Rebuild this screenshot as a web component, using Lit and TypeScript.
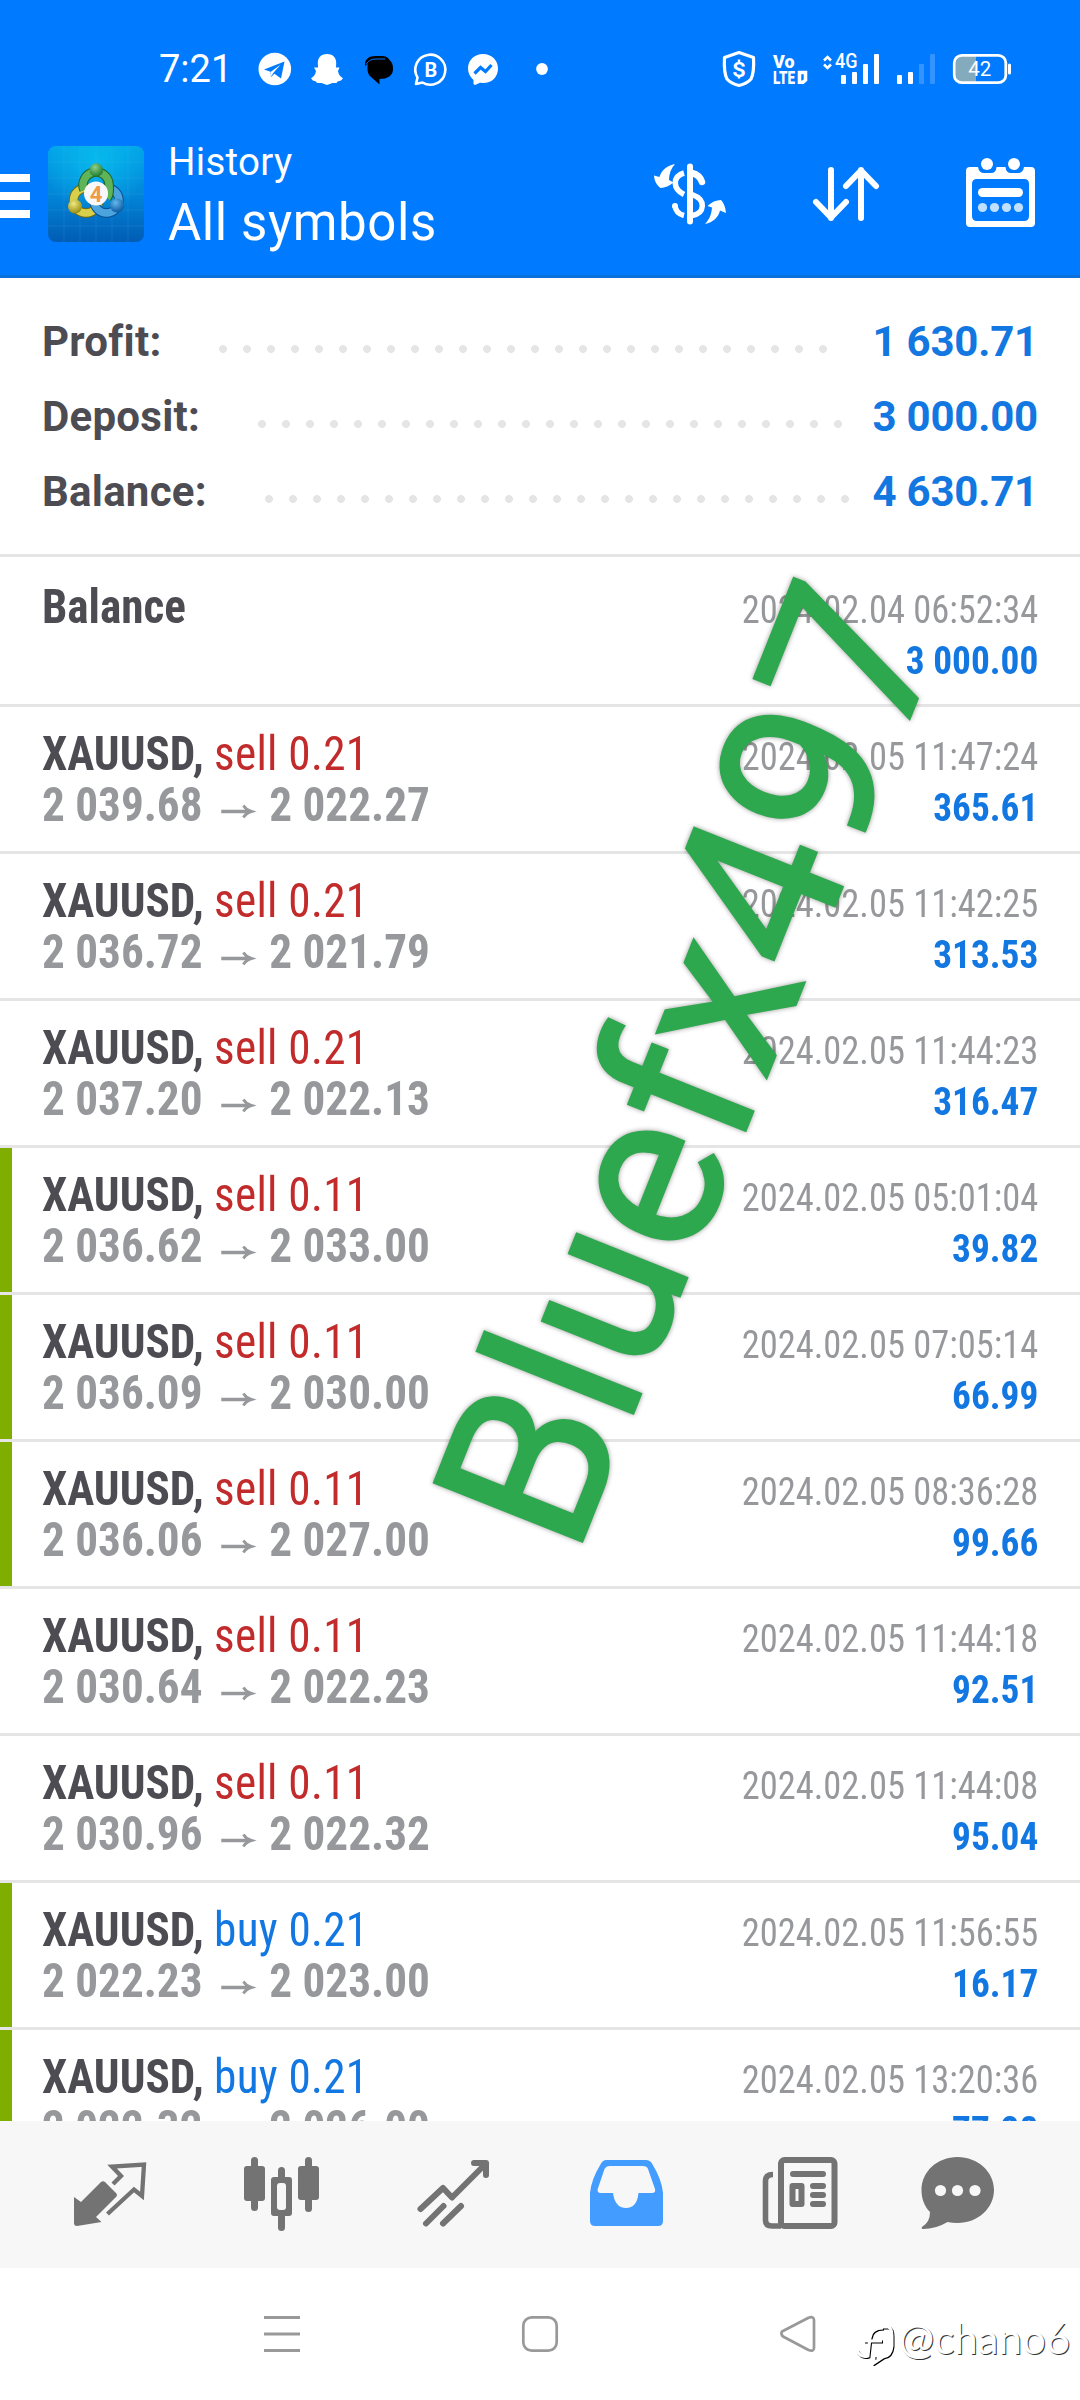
import { LitElement, html, css, svg, nothing } from 'lit';
import { customElement, property } from 'lit/decorators.js';
import { classMap } from 'lit/directives/class-map.js';

interface Deal {
  symbol: string;
  side?: 'sell' | 'buy';
  volume?: string;
  open?: string;
  close?: string;
  time: string;
  profit: string;
  marked?: boolean;
}

const SUMMARY = [
  { label: 'Profit:', value: '1 630.71', dots: 26 },
  { label: 'Deposit:', value: '3 000.00', dots: 25 },
  { label: 'Balance:', value: '4 630.71', dots: 25 },
];

const DEALS: Deal[] = [
  { symbol: 'Balance', time: '2024.02.04 06:52:34', profit: '3 000.00' },
  { symbol: 'XAUUSD', side: 'sell', volume: '0.21', open: '2 039.68', close: '2 022.27', time: '2024.02.05 11:47:24', profit: '365.61' },
  { symbol: 'XAUUSD', side: 'sell', volume: '0.21', open: '2 036.72', close: '2 021.79', time: '2024.02.05 11:42:25', profit: '313.53' },
  { symbol: 'XAUUSD', side: 'sell', volume: '0.21', open: '2 037.20', close: '2 022.13', time: '2024.02.05 11:44:23', profit: '316.47' },
  { symbol: 'XAUUSD', side: 'sell', volume: '0.11', open: '2 036.62', close: '2 033.00', time: '2024.02.05 05:01:04', profit: '39.82', marked: true },
  { symbol: 'XAUUSD', side: 'sell', volume: '0.11', open: '2 036.09', close: '2 030.00', time: '2024.02.05 07:05:14', profit: '66.99', marked: true },
  { symbol: 'XAUUSD', side: 'sell', volume: '0.11', open: '2 036.06', close: '2 027.00', time: '2024.02.05 08:36:28', profit: '99.66', marked: true },
  { symbol: 'XAUUSD', side: 'sell', volume: '0.11', open: '2 030.64', close: '2 022.23', time: '2024.02.05 11:44:18', profit: '92.51' },
  { symbol: 'XAUUSD', side: 'sell', volume: '0.11', open: '2 030.96', close: '2 022.32', time: '2024.02.05 11:44:08', profit: '95.04' },
  { symbol: 'XAUUSD', side: 'buy', volume: '0.21', open: '2 022.23', close: '2 023.00', time: '2024.02.05 11:56:55', profit: '16.17', marked: true },
  { symbol: 'XAUUSD', side: 'buy', volume: '0.21', open: '2 022.32', close: '2 026.00', time: '2024.02.05 13:20:36', profit: '77.28', marked: true },
];

// Icons share the coordinate space of the screen, each one shows its own window of it
const icon = (x: number, y: number, w: number, h: number, body: unknown) => html`
  <svg class="icon" width=${w} height=${h} viewBox="${x} ${y} ${w} ${h}">${body}</svg>
`;

@customElement('status-bar')
export class StatusBar extends LitElement {
  static styles = css`
    :host {
      display: flex;
      box-sizing: border-box;
      height: 138px;
      padding: 51px 68px 0 159px;
      justify-content: space-between;
      color: #ffffff;
      font-family: Roboto, sans-serif;
    }

    .group {
      display: flex;
      height: 36px;
    }

    .left {
      gap: 18px;
    }

    .right {
      gap: 12px;
    }

    .time {
      width: 81px;
      font-size: 38px;
      line-height: 36px;
      font-weight: 400;
      white-space: nowrap;
    }

    .icon {
      display: block;
      overflow: visible;
    }
  `;

  render() {
    return html`
      <div class="group left">
        <div class="time">7:21</div>
        ${icon(258, 51, 34, 36, svg`
          <circle cx="274.8" cy="69" r="16.3" fill="#fff"/>
          <path d="M264 69.5 L284.5 61.5 L281 78.5 L274.5 73.8 L271 77 L270.5 71.8 Z" fill="#007aff"/>
          <path d="M270.5 72 L280.5 64.8 L273 73.2 L271.4 76.6 Z" fill="#fff"/>
        `)}
        ${icon(310, 51, 34, 36, svg`
          <path d="M327 54 C333.500 54 336.200 58 336.200 63 L336 67.500 L339.500 67.500 L338 71 C338.500 74.500 340.500 77 343 78.300 L341 80.500 L337.500 81.500 L336.500 83 L332.500 83 L327 85 L321.500 83 L317 83 L316 81.500 L312.800 80.500 L311 78.300 C313.500 77 315.500 74.500 316 71 L314 67.500 L318 67.500 L317.800 63 C317.800 58 320.500 54 327 54 Z" fill="#fff"/>
        `)}
        ${icon(362, 51, 34, 36, svg`
          <path d="M365 66 C364.500 59 369 56 375 56 L382 56 C386 56 388.500 58 389.500 60 C392 62 393.200 65 393 69 C393 74 390 77 385 78.500 L379.500 79 L379.500 84.500 L370.500 76.500 C367.500 74 367 69 367.800 64 Z" fill="#000"/>
          <path d="M366 64.500 C369 60 372 59 377 59 L385 59" fill="none" stroke="#007aff" stroke-width="1"/>
        `)}
        ${icon(414, 51, 34, 36, svg`
          <path d="M416 84 L417.500 77.500 A15 15 0 1 1 422.500 82.500 Z" fill="none" stroke="#fff" stroke-width="2.600" stroke-linejoin="round"/>
          <text x="431" y="76.500" text-anchor="middle" font-size="20" font-weight="700" fill="#fff">B</text>
        `)}
        ${icon(466, 51, 34, 36, svg`
          <path d="M483 54 C492 54 498 60.500 498 68.500 C498 77 492 83 483 83 L480 82.700 L475 85 L473.500 84 L473.500 80 C470 77 468 73 468 68.500 C468 60.500 474 54 483 54 Z" fill="#fff"/>
          <path d="M474.500 73.500 L480.500 67.500 L485.500 71.500 L491.500 65" fill="none" stroke="#007aff" stroke-width="3.200"/>
        `)}
        ${icon(518, 51, 34, 36, svg`<circle cx="542" cy="69" r="5.900" fill="#fff"/>`)}
      </div>
      <div class="group right">
        ${icon(722, 51, 38, 36, svg`
          <path d="M739 52.500 L753.500 57.500 C754 66 753.500 74 751 79 C748 82.500 743 84.500 739 85.500 C735 84.500 730 82.500 727 79 C724.500 74 724 66 724.500 57.500 Z" fill="none" stroke="#fff" stroke-width="3.200" stroke-linejoin="round"/>
          <text x="739" y="76.500" text-anchor="middle" font-size="21" font-weight="700" fill="#fff">S</text>
          <path d="M739 59.500 V62 M739 76 V78.500" stroke="#fff" stroke-width="2.500"/>
        `)}
        ${icon(772, 51, 38, 36, svg`
          <text x="773" y="67.500" font-size="18" font-weight="900" fill="#fff" textLength="21.500" lengthAdjust="spacingAndGlyphs">Vo</text>
          <text x="773" y="83.800" font-size="18.500" font-weight="900" fill="#fff" textLength="22" lengthAdjust="spacingAndGlyphs">LTE</text>
          <path d="M799.500 72.500 H805.500 V80 L803 82.300 H799.500 Z" fill="none" stroke="#fff" stroke-width="3.600"/>
        `)}
        ${icon(822, 51, 62, 36, svg`
          <path d="M824 60.500 L827.500 57 L831 60.500 M824 64.500 L827.500 68 L831 64.500" fill="none" stroke="#fff" stroke-width="2.600"/>
          <text x="835" y="68.300" font-size="20" font-weight="500" fill="#fff" textLength="22.500" lengthAdjust="spacingAndGlyphs">4G</text>
          <g fill="#fff">
            <rect x="841" y="75" width="5" height="9" rx="1"/>
            <rect x="852" y="72" width="5" height="12" rx="1"/>
            <rect x="863" y="64" width="5" height="20" rx="1"/>
            <rect x="874" y="54" width="5" height="30" rx="1"/>
          </g>
        `)}
        ${icon(896, 51, 44, 36, svg`
          <g fill="#fff">
            <rect x="897" y="75" width="5" height="9" rx="1"/>
            <rect x="908" y="72" width="5" height="12" rx="1"/>
            <rect x="919" y="64" width="5" height="20" rx="1" opacity="0.200"/>
            <rect x="930" y="54" width="5" height="30" rx="1" opacity="0.200"/>
          </g>
        `)}
        ${icon(952, 51, 60, 36, svg`
          <path d="M976 56 H962 Q956 56 956 62 V76 Q956 82 962 82 H976 Z" fill="#84abbd"/>
          <rect x="954.300" y="55.300" width="51.500" height="27.400" rx="7.500" fill="none" stroke="#fff" stroke-width="2.800"/>
          <rect x="1008" y="63.500" width="3" height="11" rx="1.500" fill="#fff"/>
          <text x="979.700" y="76" text-anchor="middle" font-size="20.500" fill="#fff">42</text>
        `)}
      </div>
    `;
  }
}

@customElement('tool-bar')
export class ToolBar extends LitElement {
  static styles = css`
    :host {
      display: flex;
      box-sizing: border-box;
      height: 140px;
      border-bottom: 3px solid #0b6fdb;
      color: #ffffff;
      font-family: Roboto, sans-serif;
    }

    .icon {
      display: block;
      flex: none;
    }

    .titles {
      flex: 1;
      padding: 1px 0 0 20px;
      white-space: nowrap;
    }

    .caption {
      font-size: 38.5px;
      line-height: 46px;
      letter-spacing: 0.3px;
    }

    .title {
      font-size: 51px;
      line-height: 76px;
      letter-spacing: 0.6px;
    }

    .actions {
      display: flex;
      gap: 50px;
      padding-right: 30px;
    }
  `;

  private _logo() {
    return svg`
      <defs>
        <linearGradient id="sky" x1="0" y1="0" x2="0" y2="1">
          <stop offset="0" stop-color="#02a4e8"/>
          <stop offset="0.500" stop-color="#0286d8"/>
          <stop offset="1" stop-color="#015cb4"/>
        </linearGradient>
        <radialGradient id="glow" cx="0.500" cy="0.150" r="0.550">
          <stop offset="0" stop-color="#08c0ee" stop-opacity="0.800"/>
          <stop offset="1" stop-color="#08c0ee" stop-opacity="0"/>
        </radialGradient>
        <radialGradient id="green" cx="0.400" cy="0.300" r="0.700">
          <stop offset="0" stop-color="#8fd08a"/><stop offset="1" stop-color="#1e7a2c"/>
        </radialGradient>
        <radialGradient id="yellow" cx="0.400" cy="0.300" r="0.700">
          <stop offset="0" stop-color="#f0ea80"/><stop offset="1" stop-color="#988c10"/>
        </radialGradient>
        <radialGradient id="blue" cx="0.400" cy="0.300" r="0.700">
          <stop offset="0" stop-color="#64b8ea"/><stop offset="1" stop-color="#0c5aa4"/>
        </radialGradient>
      </defs>
      <rect x="48" y="146" width="96" height="96" rx="8" fill="url(#sky)"/>
      <rect x="48" y="146" width="96" height="96" rx="8" fill="url(#glow)"/>
      <path d="M64 146 V242 M80 146 V242 M96 146 V242 M112 146 V242 M128 146 V242 M48 162 H144 M48 178 H144 M48 194 H144 M48 210 H144 M48 226 H144" stroke="#5cc4f4" stroke-opacity="0.150" stroke-width="1"/>
      <g fill="none">
        <circle cx="86" cy="200.500" r="12.500" stroke="#6e6a10" stroke-width="9.500"/>
        <circle cx="86" cy="200.500" r="12.500" stroke="#d8d04a" stroke-width="7.500"/>
        <circle cx="106.500" cy="200.500" r="12.500" stroke="#0b4f92" stroke-width="9.500"/>
        <circle cx="106.500" cy="200.500" r="12.500" stroke="#4ba4de" stroke-width="7.500"/>
        <path d="M84 190 A13 13 0 1 1 109 185 Q110 194 107 198" stroke="#1b6426" stroke-width="9.500"/>
        <path d="M84 190 A13 13 0 1 1 109 185 Q110 194 107 198" stroke="#5fb45a" stroke-width="7.500"/>
      </g>
      <circle cx="96.300" cy="170" r="6.800" fill="url(#green)"/>
      <circle cx="75" cy="206.500" r="7" fill="url(#yellow)"/>
      <circle cx="117" cy="205.500" r="7" fill="url(#blue)"/>
      <circle cx="96" cy="193.500" r="12" fill="#f8f8fa"/>
      <text x="96" y="201.500" text-anchor="middle" font-size="22" font-weight="700" fill="#f09a48">4</text>
    `;
  }

  render() {
    return html`
      ${icon(0, 138, 48, 110, svg`<path d="M0 178 H30 M0 196 H30 M0 214 H30" stroke="#fff" stroke-width="8"/>`)}
      ${icon(48, 138, 100, 110, this._logo())}
      <div class="titles">
        <div class="caption">History</div>
        <div class="title">All symbols</div>
      </div>
      <div class="actions">
        ${icon(640, 138, 100, 110, svg`
          <path d="M690 166.500 V221.500" stroke="#fff" stroke-width="6" stroke-linecap="round"/>
          <path d="M684 173 C677 175 675 179 675.300 183.500 C675.600 189 679 192 684 194.500 M684 215.500 C678 214 675.500 210 675 206" fill="none" stroke="#fff" stroke-width="5.500"/>
          <path d="M692 173 C698 174.500 700.500 177 702 182" fill="none" stroke="#fff" stroke-width="6.500" stroke-linecap="round"/>
          <path d="M692 194.500 C699 197 702.500 200.500 702.300 206 C702 211.500 698 214.500 692 215.500" fill="none" stroke="#fff" stroke-width="5.500"/>
          <circle cx="675" cy="206" r="3" fill="#fff"/>
          <path d="M675 164 C667 165.500 661.500 170 659.500 177 L654 175.500 C654.500 181.500 657 185.500 660.500 188 C665 187.700 669.500 186 673.500 182.500 L669 180 C669 173.500 671 168.500 675 164 Z" fill="#fff"/>
          <path d="M705 224 C713 222.500 718.500 217 720 210.500 L726 213 C725.500 207 723.500 202.500 721 200 C716 200 711.500 202 707.500 206 L712 207.500 C711.500 214.500 709.500 219 705 224 Z" fill="#fff"/>
        `)}
        ${icon(790, 138, 110, 110, svg`
          <path d="M831 170 V218 M816 202 L831 217.500 L846 202 M861 218 V170 M846 186 L861 170.500 L876 186" fill="none" stroke="#fff" stroke-width="6" stroke-linecap="round" stroke-linejoin="round"/>
        `)}
        ${icon(950, 138, 100, 110, svg`
          <path fill-rule="evenodd" d="M970 167 H978 Q979 173 984 173 H991 Q996 173 996.500 167 H1005.500 Q1006 173 1011 173 H1018 Q1023 173 1024 167 H1031 Q1035 167 1035 171 V223 Q1035 227 1031 227 H970 Q966 227 966 223 V171 Q966 167 970 167 Z M977 179 Q972 179 972 184 V216 Q972 221 977 221 H1024 Q1029 221 1029 216 V184 Q1029 179 1024 179 Z" fill="#fff"/>
          <circle cx="987" cy="164" r="6" fill="#fff"/>
          <circle cx="1014" cy="164" r="6" fill="#fff"/>
          <path d="M982.500 192.500 H1018.500" stroke="#fff" stroke-width="9" stroke-linecap="round"/>
          <g fill="#c0e0ff">
            <circle cx="982.500" cy="207.500" r="4.600"/><circle cx="994.500" cy="207.500" r="4.600"/>
            <circle cx="1006.500" cy="207.500" r="4.600"/><circle cx="1018.500" cy="207.500" r="4.600"/>
          </g>
        `)}
      </div>
    `;
  }
}

@customElement('deal-row')
export class DealRow extends LitElement {
  @property({ attribute: false }) deal!: Deal;

  static styles = css`
    :host {
      display: block;
      border-top: 3px solid #e5e5e5;
      font-family: 'Roboto Condensed', Roboto, sans-serif;
      font-stretch: 75%;
    }

    .row {
      display: flex;
      justify-content: space-between;
      box-sizing: border-box;
      height: 144px;
      padding: 21px 42px 0;
      white-space: nowrap;
    }

    .marked {
      padding-left: 30px;
      border-left: 12px solid #80ae00;
    }

    .initial {
      height: 147px;
      padding-top: 24px;
    }

    .line {
      font-size: 48px;
      line-height: 51px;
      transform: scaleX(0.941);
      transform-origin: left;
    }

    .symbol {
      font-weight: 700;
      color: #4d4c52;
    }

    .sell,
    .buy {
      letter-spacing: 0.3px;
    }

    .sell {
      color: #c22b2b;
    }

    .buy {
      color: #1277e1;
    }

    .prices {
      display: flex;
      font-weight: 700;
      color: #97989b;
    }

    .arrow {
      display: block;
      width: 71px;
      height: 51px;
    }

    .right {
      padding-top: 3px;
      text-align: right;
      font-size: 39.5px;
      line-height: 51px;
    }

    .time {
      color: #97989b;
      transform: scaleX(0.923);
      transform-origin: right;
    }

    .profit {
      font-weight: 700;
      color: #1277e1;
      transform: scaleX(0.945);
      transform-origin: right;
    }
  `;

  render() {
    const d = this.deal;
    return html`
      <div class=${classMap({ row: true, marked: !!d.marked, initial: !d.side })}>
        <div>
          <div class="line">
            <span class="symbol">${d.symbol}${d.side ? ',' : ''}</span>
            ${d.side ? html`<span class=${d.side}>${d.side} ${d.volume}</span>` : nothing}
          </div>
          ${d.side
            ? html`
                <div class="line prices">
                  <span>${d.open}</span>
                  <svg class="arrow" viewBox="0 0 71 51">
                    <path d="M19.500 32.500 H50" stroke="#97989b" stroke-width="3.500"/>
                    <path d="M43 26.500 Q46 31 51.500 32.500 Q46 34 43 38.500" fill="none" stroke="#97989b" stroke-width="3"/>
                  </svg>
                  <span>${d.close}</span>
                </div>
              `
            : nothing}
        </div>
        <div class="right">
          <div class="time">${d.time}</div>
          <div class="profit">${d.profit}</div>
        </div>
      </div>
    `;
  }
}

@customElement('tab-bar')
export class TabBar extends LitElement {
  static styles = css`
    :host {
      display: flex;
      height: 147px;
      padding: 0 24px;
      background: #f7f7f7;
    }

    .icon {
      display: block;
      flex: none;
    }
  `;

  render() {
    return html`
      ${icon(24, 2121, 172, 147, svg`
        <path d="M101 2182 Q103 2180.500 105 2182 L116.500 2193.500 Q117.500 2195 116.500 2196.500 L96 2217 L101.500 2222 L77 2226 Q74 2226 74 2223 V2197 L81 2202 Z" fill="#737373"/>
        <path d="M113 2184 L121 2176 L112 2166.500 L144 2164.500 L142 2196 L134 2189.500 L107.500 2214" fill="none" stroke="#737373" stroke-width="4.300"/>
      `)}
      ${icon(196, 2121, 172, 147, svg`
        <g fill="#737373">
          <rect x="244" y="2166" width="21" height="35" rx="3"/><rect x="251" y="2157" width="7" height="54" rx="3.500"/>
          <rect x="298" y="2166" width="21" height="34" rx="3"/><rect x="305" y="2157" width="7" height="55" rx="3.500"/>
          <rect x="271" y="2177" width="21" height="39" rx="3"/><rect x="278" y="2167" width="7" height="64" rx="3.500"/>
        </g>
        <rect x="277" y="2183" width="9" height="27" rx="3" fill="#f7f7f7"/>
      `)}
      ${icon(368, 2121, 172, 147, svg`
        <path d="M420.500 2209 L443 2188 L452 2197.500 L486 2163.500 M474 2163 H486 V2175" fill="none" stroke="#737373" stroke-width="6" stroke-linecap="round" stroke-linejoin="round"/>
        <path d="M426 2223.500 L443.500 2206 M443 2223.500 L461 2206" stroke="#737373" stroke-width="6" stroke-linecap="round"/>
      `)}
      ${icon(540, 2121, 172, 147, svg`
        <path fill-rule="evenodd" d="M606 2160 H646 Q650 2160 652 2163.500 Q662 2180 663 2193 V2221 Q663 2226 658 2226 H595 Q590 2226 590 2221 V2193 Q591 2180 601 2163.500 Q603 2160 606 2160 Z M610 2166 Q606 2166 604.500 2169 L597.700 2189 Q597 2193 600.500 2193 H613 Q615 2208 626 2208 Q637 2208 638.500 2193 H652 Q656 2193 655 2189 L648 2169 Q647 2166 643 2166 Z" fill="#439cff"/>
      `)}
      ${icon(712, 2121, 172, 147, svg`
        <rect x="781" y="2160" width="53.500" height="66" rx="3.500" fill="none" stroke="#737373" stroke-width="6"/>
        <path d="M773 2174.500 Q765.500 2174.500 765.500 2181 V2220 Q765.500 2226 772 2226 H781" fill="none" stroke="#737373" stroke-width="5.600"/>
        <path d="M793 2174 H823 M813 2186 H823 M813 2195 H823 M813 2204 H823" stroke="#737373" stroke-width="6" stroke-linecap="round"/>
        <rect x="792.500" y="2186" width="9" height="18" fill="none" stroke="#737373" stroke-width="6" stroke-linejoin="round"/>
      `)}
      ${icon(884, 2121, 172, 147, svg`
        <path d="M957.500 2157 C978 2157 994 2172 994 2190 C994 2208 978 2223 957.500 2223 Q952 2223 947.500 2222 Q936 2229 923 2229 Q920.500 2228.500 922.500 2226.500 Q930 2222 930 2212 C924 2206 921.500 2198 921.500 2190 C921.500 2172 937 2157 957.500 2157 Z" fill="#737373"/>
        <g fill="#f7f7f7">
          <circle cx="940.500" cy="2190.500" r="5.600"/><circle cx="957.500" cy="2190.500" r="5.600"/><circle cx="975" cy="2190.500" r="5.600"/>
        </g>
      `)}
    `;
  }
}

@customElement('nav-bar')
export class NavBar extends LitElement {
  static styles = css`
    :host {
      display: flex;
      align-items: center;
      justify-content: space-between;
      height: 132px;
      padding: 0 263px;
      background: #ffffff;
    }

    .icon {
      display: block;
      flex: none;
    }
  `;

  render() {
    return html`
      ${icon(263, 2315, 38, 38, svg`<path d="M264 2317.500 H300 M264 2334 H300 M264 2350.500 H300" stroke="#999" stroke-width="3"/>`)}
      ${icon(521, 2315, 38, 38, svg`<rect x="523.300" y="2317.300" width="33.400" height="33.400" rx="8.500" fill="none" stroke="#999" stroke-width="2.700"/>`)}
      ${icon(779, 2315, 38, 38, svg`<path d="M782 2331.500 L808.500 2317.700 Q814 2316 814 2320 V2348 Q814 2352 808.500 2350 L783 2336.500 Q780.500 2334 782 2331.500 Z" fill="none" stroke="#999" stroke-width="2.700" stroke-linejoin="round"/>`)}
    `;
  }
}

@customElement('app-root')
export class AppRoot extends LitElement {
  static styles = css`
    :host {
      display: flex;
      flex-direction: column;
      position: relative;
      width: 1080px;
      height: 2400px;
      overflow: hidden;
      background: #ffffff;
      font-family: Roboto, sans-serif;
    }

    .header {
      background: #007aff;
    }

    .summary {
      padding: 26px 42px 25px;
      font-size: 42px;
      font-weight: 700;
      line-height: 75px;
    }

    .total {
      display: flex;
      height: 75px;
      color: #4d4c52;
    }

    .label {
      letter-spacing: 0.25px;
    }

    .dots {
      height: 8px;
      margin: 41px 0 0 50px;
      background: radial-gradient(circle at center, #e5e5e5 3.6px, transparent 4.3px) 0 0 / 24px 8px;
    }

    .value {
      margin-left: auto;
      letter-spacing: -0.2px;
      color: #1277e1;
    }

    .deals {
      flex: 1;
      min-height: 0;
      overflow: hidden;
    }

    .stamp {
      position: absolute;
      left: 0;
      top: 0;
      pointer-events: none;
      filter: drop-shadow(0 0 2.5px rgba(0, 0, 0, 0.4));
    }

    .stamp text {
      font-family: Roboto, sans-serif;
      font-size: 223.5px;
      fill: #2ea84e;
      stroke: #2ea84e;
      stroke-width: 3px;
    }

    .author {
      position: absolute;
      left: 855px;
      top: 2311px;
      display: flex;
      align-items: center;
      color: #ffffff;
      font-family: Lato, sans-serif;
      font-size: 42px;
      line-height: 54px;
      white-space: nowrap;
      text-shadow: 1px 1px 0 #333333;
    }

    .author-logo {
      display: block;
      filter: drop-shadow(1px 1.5px 0 #000000);
    }
  `;

  render() {
    return html`
      <div class="header">
        <status-bar></status-bar>
        <tool-bar></tool-bar>
      </div>
      <div class="summary">
        ${SUMMARY.map(
          (item) => html`
            <div class="total">
              <span class="label">${item.label}</span>
              <div class="dots" style="width: ${item.dots * 24}px"></div>
              <span class="value">${item.value}</span>
            </div>
          `
        )}
      </div>
      <div class="deals">
        ${DEALS.map((deal) => html`<deal-row .deal=${deal}></deal-row>`)}
      </div>
      <tab-bar></tab-bar>
      <nav-bar></nav-bar>

      <svg class="stamp" width="1080" height="1700" viewBox="0 0 1080 1700">
        <text x="-18.500" y="0" transform="translate(582 1541) rotate(-68.300)">Bluefx497</text>
      </svg>
      <div class="author">
        <svg class="author-logo" width="44" height="54" viewBox="856 2311 44 54">
          <path d="M884 2327 H889 Q893 2328 893 2336 V2346 Q892 2356 884 2357 L875 2363 V2356 M884 2328 Q872 2328 871 2338 L869 2356 Q862 2358 858 2351 M865 2341 H883" fill="none" stroke="#fff" stroke-width="3"/>
        </svg>
        <span>@chano6</span>
      </div>
    `;
  }
}
